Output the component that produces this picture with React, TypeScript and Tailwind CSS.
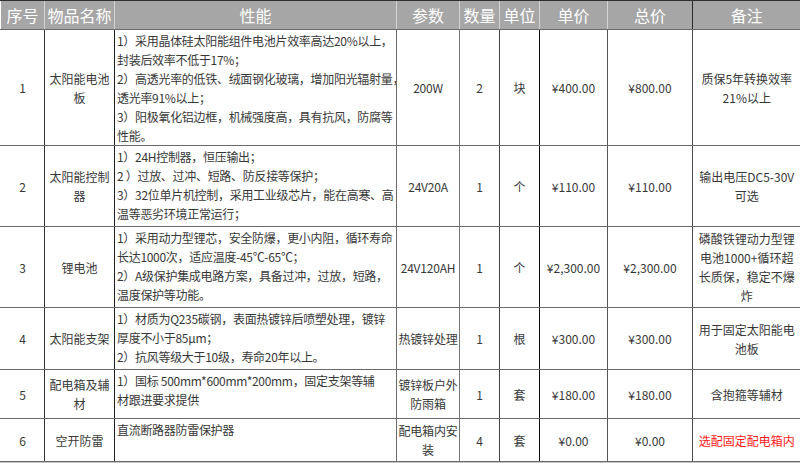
import React from 'react';

// Quote sheet for a small solar kit. Column widths follow the sheet's grid.
const columns = [
  { title: '序号', w: 'w-[44px]', line: 'border-l-transparent', headLine: 'border-l-transparent' },
  { title: '物品名称', w: 'w-[70px]', line: 'border-l-[#333]', headLine: 'border-l-[#d4d4d4]' },
  { title: '性能', w: 'w-[282px]', line: 'border-l-[#1f1f1f]', headLine: 'border-l-[#d4d4d4]' },
  { title: '参数', w: 'w-[63px]', line: 'border-l-[#6a6a6a]', headLine: 'border-l-[#d4d4d4]' },
  { title: '数量', w: 'w-[40px]', line: 'border-l-[#777]', headLine: 'border-l-[#d4d4d4]' },
  { title: '单位', w: 'w-[40px]', line: 'border-l-[#444]', headLine: 'border-l-[#d4d4d4]' },
  { title: '单价', w: 'w-[68px]', line: 'border-l-[#111]', headLine: 'border-l-[#d4d4d4]' },
  { title: '总价', w: 'w-[85px]', line: 'border-l-[#555]', headLine: 'border-l-[#d4d4d4]' },
  { title: '备注', w: 'w-[108px]', line: 'border-l-[#4a4a4a]', headLine: 'border-l-[#2a2a2a]' },
];

interface Item {
  no: string;
  name: string[];
  specs: string[];
  param: string[];
  qty: string;
  unit: string;
  price: string;
  total: string;
  note: string[];
  noteRed?: boolean;
  h: string;
}

const items: Item[] = [
  {
    no: '1',
    name: ['太阳能电池', '板'],
    specs: [
      '1）采用晶体硅太阳能组件电池片效率高达20%以上，',
      '封装后效率不低于17%；',
      '2）高透光率的低铁、绒面钢化玻璃，增加阳光辐射量，',
      '透光率91%以上；',
      '3）阳极氧化铝边框，机械强度高，具有抗风，防腐等',
      '性能。',
    ],
    param: ['200W'],
    qty: '2',
    unit: '块',
    price: '¥400.00',
    total: '¥800.00',
    note: ['质保5年转换效率', '21%以上'],
    h: 'h-[116px]',
  },
  {
    no: '2',
    name: ['太阳能控制', '器'],
    specs: [
      '1）24H控制器，恒压输出；',
      '2 ）过放、过冲、短路、防反接等保护；',
      '3）32位单片机控制，采用工业级芯片，能在高寒、高',
      '温等恶劣环境正常运行；',
    ],
    param: ['24V20A'],
    qty: '1',
    unit: '个',
    price: '¥110.00',
    total: '¥110.00',
    note: ['输出电压DC5-30V', '可选'],
    h: 'h-[81px]',
  },
  {
    no: '3',
    name: ['锂电池'],
    specs: [
      '1）采用动力型锂芯，安全防爆，更小内阻，循环寿命',
      '长达1000次，适应温度-45℃-65℃；',
      '2）A级保护集成电路方案，具备过冲，过放，短路，',
      '温度保护等功能。',
    ],
    param: ['24V120AH'],
    qty: '1',
    unit: '个',
    price: '¥2,300.00',
    total: '¥2,300.00',
    note: ['磷酸铁锂动力型锂', '电池1000+循环超', '长质保，稳定不爆', '炸'],
    h: 'h-[81px]',
  },
  {
    no: '4',
    name: ['太阳能支架'],
    specs: [
      '1）材质为Q235碳钢，表面热镀锌后喷塑处理，镀锌',
      '厚度不小于85μm；',
      '2）抗风等级大于10级，寿命20年以上。',
    ],
    param: ['热镀锌处理'],
    qty: '1',
    unit: '根',
    price: '¥300.00',
    total: '¥300.00',
    note: ['用于固定太阳能电', '池板'],
    h: 'h-[62px]',
  },
  {
    no: '5',
    name: ['配电箱及辅', '材'],
    specs: ['1）国标  500mm*600mm*200mm，固定支架等辅', '材跟进要求提供'],
    param: ['镀锌板户外', '防雨箱'],
    qty: '1',
    unit: '套',
    price: '¥180.00',
    total: '¥180.00',
    note: ['含抱箍等辅材'],
    h: 'h-[49px]',
  },
  {
    no: '6',
    name: ['空开防雷'],
    specs: ['直流断路器防雷保护器'],
    param: ['配电箱内安', '装'],
    qty: '4',
    unit: '套',
    price: '¥0.00',
    total: '¥0.00',
    note: ['选配固定配电箱内'],
    noteRed: true,
    h: 'h-[43px]',
  },
];

function Lines({ lines }: { lines: string[] }) {
  return (
    <>
      {lines.map((l, i) => (
        <div key={i} className="whitespace-nowrap">
          {l}
        </div>
      ))}
    </>
  );
}

export default function App() {
  const cell = 'p-0 border-b border-b-[#6a6a6a] border-l text-center align-middle overflow-hidden';
  return (
    <div
      className="w-[800px] h-[463px] overflow-hidden bg-[#c4c4c4] text-[#383838] text-[12px] leading-[19px]"
      style={{ fontFamily: '"Noto Sans CJK SC", "Noto Sans", sans-serif' }}
    >
      <table className="table-fixed border-collapse w-[800px] bg-white">
        <colgroup>
          {columns.map(c => (
            <col key={c.title} className={c.w} />
          ))}
        </colgroup>
        <thead>
          <tr className="h-[29px] bg-[#a6a6a6]">
            {columns.map(c => (
              <th
                key={c.title}
                className={`p-0 border-t border-t-[#2e2e2e] border-b border-b-[#6a6a6a] border-l ${c.headLine} text-[16px] font-normal text-white leading-[26px] whitespace-nowrap overflow-hidden`}
              >
                {c.title}
              </th>
            ))}
          </tr>
        </thead>
        <tbody>
          {items.map(item => (
            <tr key={item.no} className={item.h}>
              <td className={`${cell} ${columns[0].line}`}>{item.no}</td>
              <td className={`${cell} ${columns[1].line}`}>
                <Lines lines={item.name} />
              </td>
              <td className={`${cell} ${columns[2].line} !text-left !align-top pl-[2px] pt-[1px] tracking-[-0.3px]`}>
                <Lines lines={item.specs} />
              </td>
              <td className={`${cell} ${columns[3].line} tracking-[-0.2px]`}>
                <Lines lines={item.param} />
              </td>
              <td className={`${cell} ${columns[4].line}`}>{item.qty}</td>
              <td className={`${cell} ${columns[5].line}`}>{item.unit}</td>
              <td className={`${cell} ${columns[6].line}`}>{item.price}</td>
              <td className={`${cell} ${columns[7].line}`}>{item.total}</td>
              <td className={`${cell} ${columns[8].line} ${item.noteRed ? 'text-[#ff1a1a]' : ''}`}>
                <Lines lines={item.note} />
              </td>
            </tr>
          ))}
        </tbody>
      </table>
    </div>
  );
}
